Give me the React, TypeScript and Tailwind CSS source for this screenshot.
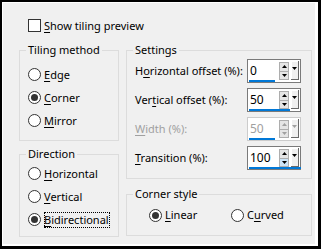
import React from "react"

const font = "font-['Noto_Sans',sans-serif] text-[11px] leading-[16px] text-black"

function Mn({ children }: { children: React.ReactNode }) {
  return <span className="underline underline-offset-[2px]">{children}</span>
}

function Radio({ checked, children, focus }: { checked?: boolean; children: React.ReactNode; focus?: boolean }) {
  return (
    <div className="flex items-center h-[23px]">
      <span className="w-[13px] h-[13px] rounded-full border border-[#333333] bg-white flex items-center justify-center">
        {checked && <span className="w-[7px] h-[7px] rounded-full bg-[#333333]" />}
      </span>
      <span className={`ml-[3px] ${focus ? "outline-1 outline-dotted outline-black outline-offset-[-1px] pr-[1px]" : ""}`}>{children}</span>
    </div>
  )
}

function Group({ label, className, children }: { label: string; className: string; children?: React.ReactNode }) {
  return (
    <div className={`relative border border-[#dcdcdc] ${className}`}>
      <span className="absolute -top-[9px] left-[6px] bg-[#f0f0f0] px-[2px]">{label}</span>
      {children}
    </div>
  )
}

function Tri({ up, color }: { up?: boolean; color: string }) {
  return (
    <svg width="5" height="3" viewBox="0 0 5 3">
      <path d={up ? "M0 3 L2.5 0 L5 3 Z" : "M0 0 L5 0 L2.5 3 Z"} fill={color} />
    </svg>
  )
}

function Spin({ value, bar, disabled, hover }: { value: string; bar: string; disabled?: boolean; hover?: boolean }) {
  const c = disabled ? "#a0a0a0" : "#000000"
  return (
    <div className={`relative w-[54px] h-[24px] border ${disabled ? "border-[#cccccc]" : "border-[#7a7a7a]"} bg-white flex items-start`}>
      <span className={`flex-1 pl-[2px] pt-[3px] text-[12px] ${disabled ? "text-[#a0a0a0]" : ""}`}>{value}</span>
      <div className="mt-[2px] w-[10px] h-[18px] flex flex-col border border-[#adadad]">
        <div className="flex-1 bg-[#e5e5e5] flex items-center justify-center border-b border-[#adadad]">
          <Tri up color={c} />
        </div>
        <div className={`flex-1 flex items-center justify-center ${hover ? "bg-[#cce4f7]" : "bg-[#e5e5e5]"}`}>
          <Tri color={c} />
        </div>
      </div>
      <div className="ml-[2px] mt-[1px] mr-[1px] w-[8px] h-[19px] bg-[#f0f0f0] border-r border-b border-[#696969] shadow-[inset_1px_1px_0_#ffffff] flex justify-center pt-[6px]">
        <Tri color={c} />
      </div>
      <div className={`absolute left-px bottom-0 h-[2px] bg-[#0078d7] ${bar}`} />
    </div>
  )
}

function Row({ label, children, disabled }: { label: React.ReactNode; children: React.ReactNode; disabled?: boolean }) {
  return (
    <div className="flex items-center h-[24px] pl-[8px] pr-[10px]">
      <span className={`flex-1 ${disabled ? "text-[#a0a0a0]" : ""}`}>{label}</span>
      {children}
    </div>
  )
}

export default function App() {
  return (
    <div className={`w-[321px] h-[249px] bg-black pt-[2px] pl-[2px] pr-[3px] pb-[3px] ${font}`}>
      <div className="h-full bg-white pt-px pl-px pr-[3px] pb-[2px]">
        <div className="h-full bg-[#f0f0f0] pl-[16px] pt-[16px]">
          <div className="flex items-center h-[13px] ml-[9px]">
            <span className="w-[13px] h-[13px] border border-[#333333] bg-white" />
            <span className="ml-[3px]"><Mn>S</Mn>how tiling preview</span>
          </div>

          <div className="flex gap-[7px] mt-[18px]">
            <div className="flex flex-col w-[100px]">
              <Group label="Tiling method" className="h-[91px] pt-[12px] pl-[8px]">
                <Radio><Mn>E</Mn>dge</Radio>
                <Radio checked><Mn>C</Mn>orner</Radio>
                <Radio><Mn>M</Mn>irror</Radio>
              </Group>
              <Group label="Direction" className="h-[83px] mt-[13px] pt-[7px] pl-[8px]">
                <Radio><Mn>H</Mn>orizontal</Radio>
                <Radio><Mn>V</Mn>ertical</Radio>
                <Radio checked focus><Mn>B</Mn>idirectional</Radio>
              </Group>
            </div>

            <div className="flex flex-col w-[186px]">
              <Group label="Settings" className="h-[129px] pt-[8px] flex flex-col gap-[5px]">
                <Row label={<>H<Mn>o</Mn>rizontal offset (%):</>}>
                  <Spin value="0" bar="w-[26px]" />
                </Row>
                <Row label={<>Ver<Mn>t</Mn>ical offset (%):</>}>
                  <Spin value="50" bar="w-[41px]" />
                </Row>
                <Row disabled label={<><Mn>W</Mn>idth (%):</>}>
                  <Spin value="50" bar="w-[26px]" disabled />
                </Row>
                <Row label={<><Mn>T</Mn>ransition (%):</>}>
                  <Spin value="100" bar="w-[52px]" hover />
                </Row>
              </Group>
              <Group label="Corner style" className="h-[42px] mt-[15px] flex items-center pl-[22px]">
                <div className="w-[82px]">
                  <Radio checked><Mn>L</Mn>inear</Radio>
                </div>
                <Radio>C<Mn>u</Mn>rved</Radio>
              </Group>
            </div>
          </div>
        </div>
      </div>
    </div>
  )
}
